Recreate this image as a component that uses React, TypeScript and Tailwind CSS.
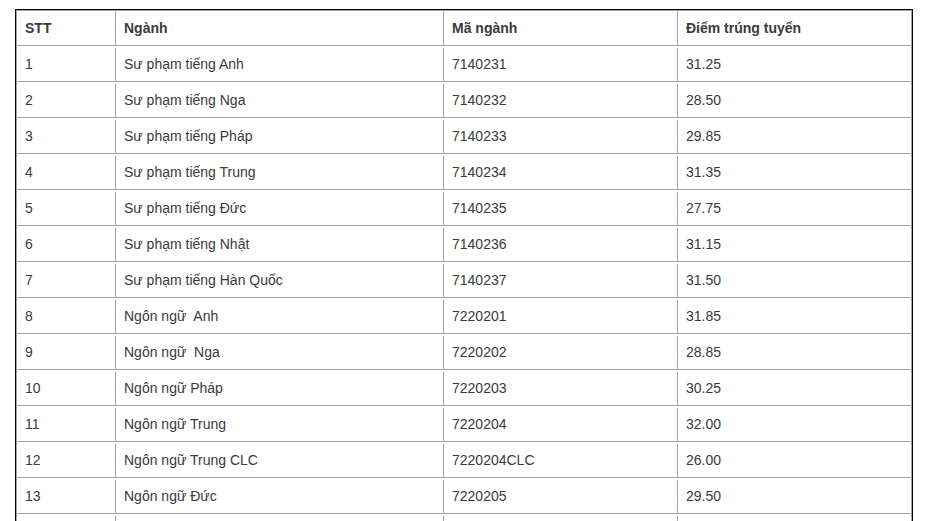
import React from "react";

const rows: [string, string, string, string][] = [
  ["1", "Sư phạm tiếng Anh", "7140231", "31.25"],
  ["2", "Sư phạm tiếng Nga", "7140232", "28.50"],
  ["3", "Sư phạm tiếng Pháp", "7140233", "29.85"],
  ["4", "Sư phạm tiếng Trung", "7140234", "31.35"],
  ["5", "Sư phạm tiếng Đức", "7140235", "27.75"],
  ["6", "Sư phạm tiếng Nhật", "7140236", "31.15"],
  ["7", "Sư phạm tiếng Hàn Quốc", "7140237", "31.50"],
  ["8", "Ngôn ngữ\u00a0 Anh", "7220201", "31.85"],
  ["9", "Ngôn ngữ\u00a0 Nga", "7220202", "28.85"],
  ["10", "Ngôn ngữ Pháp", "7220203", "30.25"],
  ["11", "Ngôn ngữ Trung", "7220204", "32.00"],
  ["12", "Ngôn ngữ Trung CLC", "7220204CLC", "26.00"],
  ["13", "Ngôn ngữ Đức", "7220205", "29.50"],
  ["", "", "", ""],
];

function Row({ cells, header }: { cells: string[]; header?: boolean }) {
  return (
    <div
      className={`flex border-b border-[#a3a3a3] ${header ? "h-[35px] font-bold" : "h-[36px] pt-[2px]"}`}
    >
      <div className="w-[99px] shrink-0 border-r border-[#a3a3a3] px-2 flex items-center">{cells[0]}</div>
      <div className="w-[328px] shrink-0 border-r border-[#a3a3a3] px-2 flex items-center">{cells[1]}</div>
      <div className="w-[234px] shrink-0 border-r border-[#a3a3a3] px-2 flex items-center">{cells[2]}</div>
      <div className="flex-1 px-2 flex items-center">{cells[3]}</div>
    </div>
  );
}

export default function App() {
  return (
    <div className="bg-white min-h-screen pt-[9px] pl-[15px] text-[14px] text-[#3a3a3a] font-['Liberation_Sans',Arial,sans-serif]">
      <div className="w-[898px] border border-black">
        <div className="border-t border-l border-r border-[#a3a3a3]">
          <Row header cells={["STT", "Ngành", "Mã ngành", "Điểm trúng tuyển"]} />
          {rows.map((r, i) => (
            <Row key={i} cells={r} />
          ))}
        </div>
      </div>
    </div>
  );
}
